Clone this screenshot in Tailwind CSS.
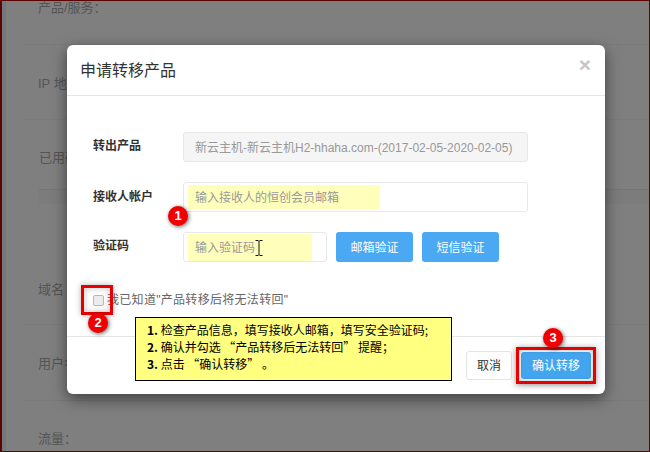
<!DOCTYPE html>
<html lang="zh">
<head>
<meta charset="utf-8">
<script src="https://cdn.jsdelivr.net/npm/@tailwindcss/browser@4"></script>
</head>
<body class="m-0">
<div class="relative w-[650px] h-[452px] overflow-hidden bg-[#7f7f7f] border-t border-b border-r border-l-2 border-[#5c0404] font-['Liberation_Sans','Noto_Sans_CJK_SC',sans-serif] text-[12px]">
  <!-- background page -->
  <div class="h-full border-l-[4px] border-[#75797e] pl-[18px] text-[#555]">
    <div class="h-[44px] border-b border-[#7a7a7a] pl-[14px] leading-[14px] text-[13px]">产品/服务：</div>
    <div class="h-[75px] border-b border-[#7a7a7a] pl-[14px] pt-[32px] leading-[14px] text-[13px]">IP 地址：</div>
    <div class="h-[76px] pl-[15px] pt-[31px] leading-[14px] text-[13px]">已用硬盘：
      <div class="mt-[24px] h-[15px] border-t border-[#767676] bg-[#7c7c7c]"></div>
    </div>
    <div class="h-[129px] border-b border-[#7a7a7a] pl-[14px] pt-[87px] leading-[14px] text-[13px]">域名</div>
    <div class="h-[76px] border-b border-[#7a7a7a] pl-[14px] pt-[32px] leading-[14px] text-[13px]">用户名：</div>
    <div class="pl-[14px] pt-[31px] leading-[14px] text-[13px]">流量：</div>
  </div>

  <!-- modal -->
  <div class="absolute left-[65px] top-[44px] w-[538px] h-[349px] flex flex-col bg-white rounded-[6px] shadow-[0_5px_15px_rgba(0,0,0,0.5)]">
    <div class="h-[51px] shrink-0 border-b border-[#e5e5e5] flex items-center justify-between pl-[14px] pr-[14px] pb-[1px]">
      <span class="text-[16px] leading-[20px] text-[#333] -ml-[1px] mt-[3px]">申请转移产品</span>
      <span class="text-[21px] leading-none font-bold text-[#c6c6c6] font-['Liberation_Sans',sans-serif] -mt-[11px]">×</span>
    </div>
    <div class="flex-1 pl-[26px] pt-[36px] flex flex-col gap-[20px]">
      <div class="flex items-center h-[30px]">
        <label class="w-[90px] font-bold text-[#333] -mt-[2px]">转出产品</label>
        <div class="w-[345px] h-[30px] border border-[#e8e8e8] rounded-[3px] bg-[#f5f5f5] pl-[11px] pt-[2px] flex items-center text-[#999]">新云主机-新云主机H2-hhaha.com-(2017-02-05-2020-02-05)</div>
      </div>
      <div class="flex items-center h-[30px]">
        <label class="w-[90px] font-bold text-[#333]">接收人帐户</label>
        <div class="w-[345px] h-[30px] border border-[#e8e8e8] rounded-[3px] bg-white pl-[4px] flex items-center text-[#999]">
          <span class="w-[192px] h-[24px] bg-[#ffffbb] pl-[7px] pt-[1px] leading-[24px]">输入接收人的恒创会员邮箱</span>
        </div>
      </div>
      <div class="flex items-center h-[30px]">
        <label class="w-[90px] font-bold text-[#333] -mt-[2px]">验证码</label>
        <div class="w-[144px] h-[30px] border border-[#e8e8e8] rounded-[3px] bg-white pl-[4px] flex items-center text-[#999]">
          <span class="relative w-[124px] h-[27px] bg-[#ffffbb] pl-[7px] pt-[1px] leading-[27px]">输入验证码
            <svg class="absolute left-[67px] top-[6px]" width="8" height="16" viewBox="0 0 8 16"><path d="M0.5 0.5H3.2L4 1.5L4.8 0.5H7.5M4 1.5V14.5M0.5 15.5H3.2L4 14.5L4.8 15.5H7.5" fill="none" stroke="#111" stroke-width="1"/></svg>
          </span>
        </div>
        <button class="ml-[9px] w-[77px] h-[30px] rounded-[3px] bg-[#4aa9f2] text-white pt-[1px]">邮箱验证</button>
        <button class="ml-[9px] w-[77px] h-[30px] rounded-[3px] bg-[#4aa9f2] text-white pt-[1px]">短信验证</button>
      </div>
      <div class="flex items-center mt-[10px] h-[16px]">
        <span class="w-[11px] h-[11px] border border-[#b9b9b9] rounded-[2px] bg-[#ececec] shrink-0"></span>
        <span class="ml-[3px] text-[#666] tracking-[0.3px]">我已知道"产品转移后将无法转回"</span>
      </div>
    </div>
    <div class="h-[58px] shrink-0 border-t border-[#e5e5e5] flex items-start justify-end pt-[14px] pr-[14px] gap-[9px]">
      <button class="w-[46px] h-[29px] border border-[#e4e4e4] rounded-[3px] bg-white text-[#333]">取消</button>
      <button class="w-[70px] h-[27px] mt-[1px] rounded-[3px] bg-[#44a5ee] text-white">确认转移</button>
    </div>
  </div>

  <!-- annotations -->
  <div class="absolute left-[79px] top-[284px] w-[32px] h-[30px] border-[3px] border-[#e60000] shadow-[0_0_6px_rgba(0,0,0,0.3),inset_0_0_6px_rgba(0,0,0,0.25)]"></div>
  <div class="absolute left-[514px] top-[346px] w-[80px] h-[37px] border-[3px] border-[#e60000] shadow-[0_1px_6px_rgba(0,0,0,0.45),inset_0_0_4px_rgba(0,0,0,0.35)]"></div>
  <div class="absolute left-[133px] top-[316px] w-[317px] h-[64px] border border-black bg-[#ffff80] pl-[11px] pt-[3px] font-['Noto_Sans_CJK_SC',sans-serif] text-[12px] leading-[17px] text-black">
    <p><b>1.</b> 检查产品信息，填写接收人邮箱，填写安全验证码;</p>
    <p><b>2.</b> 确认并勾选 “产品转移后无法转回” 提醒；</p>
    <p><b>3.</b> 点击 “确认转移” 。</p>
  </div>
  <div class="absolute left-[166px] top-[205px] w-[20px] h-[20px] rounded-full bg-[#f00000] text-white font-bold text-[13px] leading-[20px] text-center shadow-[1px_1px_4px_rgba(0,0,0,0.6)]">1</div>
  <div class="absolute left-[86px] top-[312px] w-[20px] h-[20px] rounded-full bg-[#f00000] text-white font-bold text-[13px] leading-[20px] text-center shadow-[1px_1px_4px_rgba(0,0,0,0.6)]">2</div>
  <div class="absolute left-[541px] top-[327px] w-[20px] h-[20px] rounded-full bg-[#f00000] text-white font-bold text-[13px] leading-[20px] text-center shadow-[1px_1px_4px_rgba(0,0,0,0.6)]">3</div>
</div>
</body>
</html>
